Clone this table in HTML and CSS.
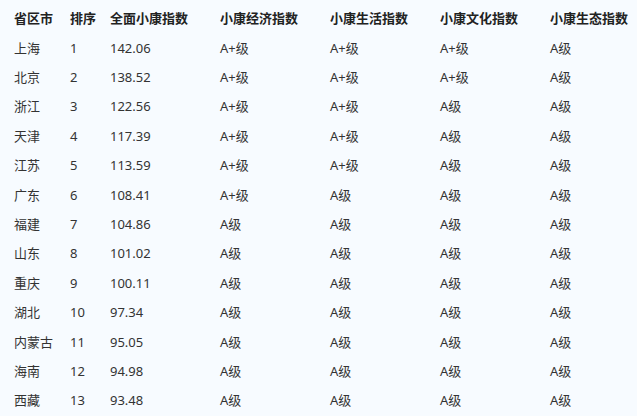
FILE: index.html
```html
<!DOCTYPE html>
<html lang="zh-CN">
<head>
<meta charset="utf-8">
<link rel="stylesheet" href="styles.css">
</head>
<body>
<div class="table">
  <div class="row head"><span>省区市</span><span>排序</span><span>全面小康指数</span><span>小康经济指数</span><span>小康生活指数</span><span>小康文化指数</span><span>小康生态指数</span></div>
  <div class="row"><span>上海</span><span>1</span><span>142.06</span><span>A+级</span><span>A+级</span><span>A+级</span><span>A级</span></div>
  <div class="row"><span>北京</span><span>2</span><span>138.52</span><span>A+级</span><span>A+级</span><span>A+级</span><span>A级</span></div>
  <div class="row"><span>浙江</span><span>3</span><span>122.56</span><span>A+级</span><span>A+级</span><span>A级</span><span>A级</span></div>
  <div class="row"><span>天津</span><span>4</span><span>117.39</span><span>A+级</span><span>A+级</span><span>A级</span><span>A级</span></div>
  <div class="row"><span>江苏</span><span>5</span><span>113.59</span><span>A+级</span><span>A+级</span><span>A级</span><span>A级</span></div>
  <div class="row"><span>广东</span><span>6</span><span>108.41</span><span>A+级</span><span>A级</span><span>A级</span><span>A级</span></div>
  <div class="row"><span>福建</span><span>7</span><span>104.86</span><span>A级</span><span>A级</span><span>A级</span><span>A级</span></div>
  <div class="row"><span>山东</span><span>8</span><span>101.02</span><span>A级</span><span>A级</span><span>A级</span><span>A级</span></div>
  <div class="row"><span>重庆</span><span>9</span><span>100.11</span><span>A级</span><span>A级</span><span>A级</span><span>A级</span></div>
  <div class="row"><span>湖北</span><span>10</span><span>97.34</span><span>A级</span><span>A级</span><span>A级</span><span>A级</span></div>
  <div class="row"><span>内蒙古</span><span>11</span><span>95.05</span><span>A级</span><span>A级</span><span>A级</span><span>A级</span></div>
  <div class="row"><span>海南</span><span>12</span><span>94.98</span><span>A级</span><span>A级</span><span>A级</span><span>A级</span></div>
  <div class="row"><span>西藏</span><span>13</span><span>93.48</span><span>A级</span><span>A级</span><span>A级</span><span>A级</span></div>
</div>
</body>
</html>
```
FILE: styles.css
```css
html, body {
  margin: 0;
  padding: 0;
  background: #f7fbff;
}
body {
  width: 637px;
  height: 416px;
  overflow: hidden;
  font-family: "Noto Sans", "Noto Sans CJK SC", sans-serif;
  font-size: 13px;
  color: #333;
}
.table {
  padding: 4px 0 0 14px;
}
.row {
  display: grid;
  grid-template-columns: 56px 40px 110px 110px 110px 110px 87px;
  height: 29.42px;
  align-items: center;
  line-height: 1;
}
.row span {
  white-space: nowrap;
}
.head {
  font-weight: bold;
  color: #222;
}
```
